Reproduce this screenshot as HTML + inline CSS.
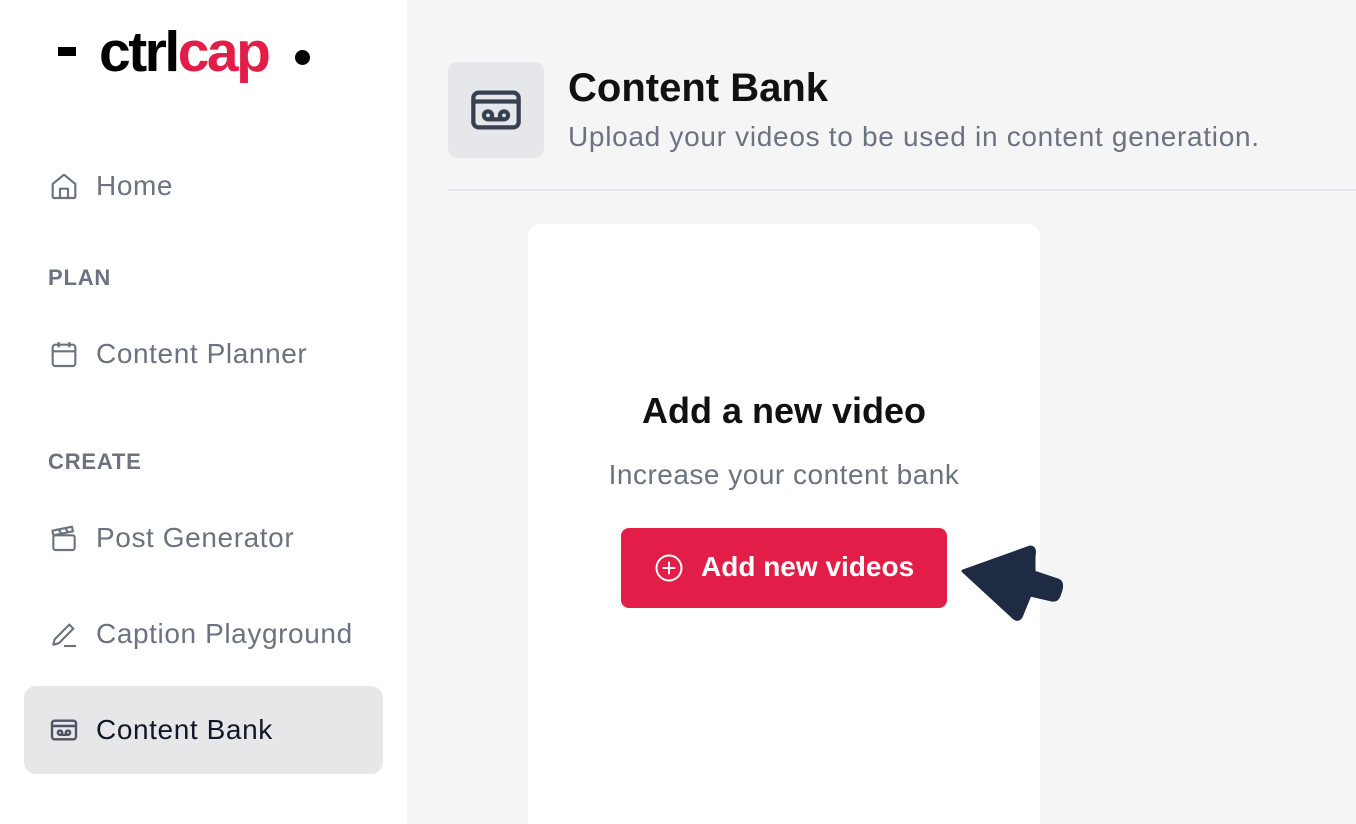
<!DOCTYPE html>
<html><head><meta charset="utf-8"><style>
*{margin:0;padding:0;box-sizing:border-box}
html,body{width:1356px;height:824px;overflow:hidden}
body{font-family:"Liberation Sans",sans-serif;background:#f5f5f5;position:relative}
.side{position:absolute;left:0;top:0;width:407px;height:824px;background:#fff}
.t{position:absolute;white-space:nowrap}
.nav{position:absolute;left:96px;font-size:28px;color:#6b7280;line-height:32px;letter-spacing:.6px}
.sec{position:absolute;left:48px;font-size:22px;font-weight:bold;color:#6b7280;letter-spacing:.8px}
svg.i{position:absolute;left:48px;width:32px;height:32px}
</style></head><body>
<div class="side">
 <div class="t" style="left:58px;top:47px;width:18px;height:9px;background:#000"></div>
 <div class="t" style="left:99px;top:20px;font-size:57px;font-weight:bold;letter-spacing:-2.5px;line-height:64px"><span style="color:#000">ctrl</span><span style="color:#e11d48">cap</span></div>
 <div class="t" style="left:295px;top:50px;width:15px;height:15px;border-radius:50%;background:#000"></div>

 <svg class="i" style="top:170px" viewBox="0 0 24 24" fill="none" stroke="#6b7280" stroke-width="1.6" stroke-linejoin="round"><path d="M3.5 10.5 12 3.5l8.5 7V20a1 1 0 0 1-1 1h-15a1 1 0 0 1-1-1z"/><path d="M9 21v-7h6v7"/></svg>
 <div class="nav" style="top:170px">Home</div>
 <div class="sec" style="top:265px">PLAN</div>
 <svg class="i" style="top:338px" viewBox="0 0 24 24" fill="none" stroke="#6b7280" stroke-width="1.6"><rect x="3.5" y="5" width="17" height="16" rx="2"/><path d="M3.5 10h17M8 3v4M16 3v4"/></svg>
 <div class="nav" style="top:338px">Content Planner</div>
 <div class="sec" style="top:449px">CREATE</div>
 <svg class="i" style="top:522px" viewBox="0 0 24 24" fill="none" stroke="#6b7280" stroke-width="1.6" stroke-linejoin="round"><rect x="4" y="10" width="16" height="11" rx="1.5"/><path d="M4 10 3.3 6.5 18 3.5l.7 3.5L4 10M8 5.7l2 3M13 4.7l2 3"/></svg>
 <div class="nav" style="top:522px">Post Generator</div>
 <svg class="i" style="top:618px" viewBox="0 0 24 24" fill="none" stroke="#6b7280" stroke-width="1.6" stroke-linejoin="round"><path d="M4 20l1-4L16 5l3 3L8 19z"/><path d="M12 21h9"/></svg>
 <div class="nav" style="top:618px">Caption Playground</div>
 <div class="t" style="left:24px;top:686px;width:359px;height:88px;background:#e7e7e9;border-radius:12px"></div>
 <svg class="i" style="top:714px" viewBox="0 0 24 24" fill="none" stroke="#4b5563" stroke-width="1.8"><rect x="3" y="5" width="18" height="14" rx="2"/><path d="M3 9h18"/><circle cx="9" cy="14" r="1.6"/><circle cx="15" cy="14" r="1.6"/><path d="M9 15.6h6"/></svg>
 <div class="nav" style="top:714px;color:#111827">Content Bank</div>
</div>

<div class="t" style="left:448px;top:62px;width:96px;height:96px;background:#e5e7eb;border-radius:10px"></div>
<svg class="t" style="left:464px;top:78px;width:64px;height:64px" viewBox="0 0 24 24" fill="none" stroke="#374151" stroke-width="1.6"><rect x="3.5" y="5.5" width="17" height="13" rx="2"/><path d="M3.5 8.8h17"/><circle cx="9" cy="14" r="1.5"/><circle cx="15" cy="14" r="1.5"/><path d="M9 15.5h6"/></svg>
<div class="t" style="left:568px;top:66px;font-size:40px;font-weight:bold;color:#111">Content Bank</div>
<div class="t" style="left:568px;top:121px;font-size:28px;color:#6b7280;letter-spacing:.7px">Upload your videos to be used in content generation.</div>
<div class="t" style="left:448px;top:189px;width:908px;height:2px;background:#e5e7eb"></div>

<div class="t" style="left:528px;top:224px;width:512px;height:600px;background:#fff;border-radius:12px 12px 0 0"></div>
<div class="t" style="left:528px;top:390px;width:512px;text-align:center;font-size:36px;font-weight:bold;color:#111">Add a new video</div>
<div class="t" style="left:528px;top:459px;width:512px;text-align:center;font-size:28px;color:#6b7280;letter-spacing:.5px">Increase your content bank</div>
<div class="t" style="left:621px;top:528px;width:326px;height:80px;background:#e11d48;border-radius:8px"></div>
<svg class="t" style="left:654px;top:553px;width:30px;height:30px" viewBox="0 0 24 24" fill="none" stroke="#fff" stroke-width="1.6"><circle cx="12" cy="12" r="10"/><path d="M12 7v10M7 12h10"/></svg>
<div class="t" style="left:701px;top:551px;font-size:28px;font-weight:bold;color:#fff">Add new videos</div>
<svg class="t" style="left:950px;top:535px;width:120px;height:95px" viewBox="950 535 120 95"><path d="M963 571 L1030 547 Q1036 547 1034 556 L1034 572 L1058 580 Q1063 582 1061 590 L1059 596 Q1057 601 1052 600 L1030 595 L1021 617 Q1018 621 1014 618 Z" fill="#1e2b43" stroke="#1e2b43" stroke-width="3" stroke-linejoin="round"/></svg>
</body></html>
